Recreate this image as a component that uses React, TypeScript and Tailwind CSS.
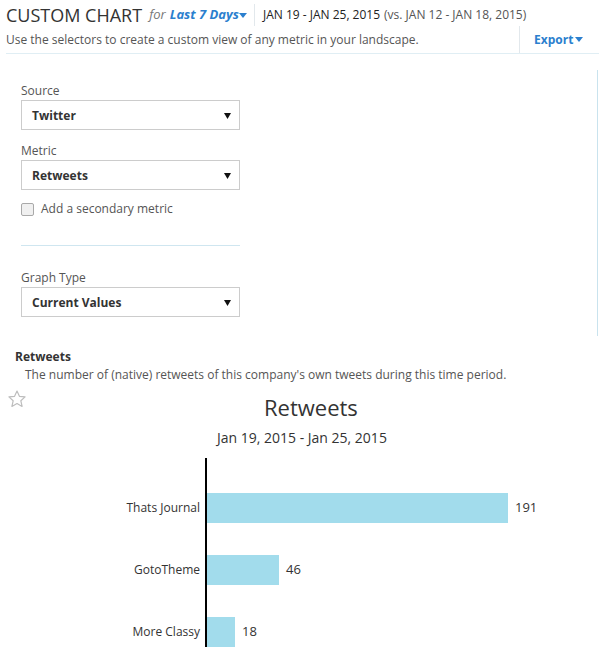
import type { ReactNode } from 'react'

const bars = [
  { label: 'Thats Journal', value: 191 },
  { label: 'GotoTheme', value: 46 },
  { label: 'More Classy', value: 18 },
]

function Caret({ className = '' }: { className?: string }) {
  return (
    <svg width="8" height="5" viewBox="0 0 8 5" className={className}>
      <path d="M0 0h8L4 5z" fill="currentColor" />
    </svg>
  )
}

function Field({ label, value, top }: { label: string; value: string; top: string }) {
  return (
    <div className={top}>
      <div className="h-[18px] pt-[1px] leading-[18px] text-[12px] text-[#555]">{label}</div>
      <div className="mt-[1px] flex h-[30px] w-[219px] items-center justify-between border border-[#ccc] pl-[10px] pr-[8px] pt-[1px]">
        <span className="text-[12px] font-bold text-[#333]">{value}</span>
        <svg width="7" height="6" viewBox="0 0 7 6">
          <path d="M0 0h7L3.5 6z" fill="#111" />
        </svg>
      </div>
    </div>
  )
}

function Divider({ children }: { children?: ReactNode }) {
  return <div className="w-px self-stretch bg-[#e2e8ec]">{children}</div>
}

export default function App() {
  const scale = 301 / 191

  return (
    <div className="w-[599px] bg-white font-['Open_Sans',sans-serif] text-[#333]">
      <div className="ml-[6px] border-b border-[#e0eef4]">
        <div className="flex h-[26px] items-center pt-[4px]">
          <span className="text-[18px] leading-[22px] text-[#333]">CUSTOM CHART</span>
          <span className="ml-[7px] text-[13px] italic text-[#777]">for</span>
          <span className="ml-[4px] text-[13px] font-bold italic text-[#2b7fce]">Last 7 Days</span>
          <Caret className="text-[#2b7fce]" />
          <div className="ml-[7px] h-full w-px bg-[#e2e8ec]" />
          <span className="ml-[8px] text-[12px] text-[#222]">JAN 19 - JAN 25, 2015</span>
          <span className="ml-[4px] text-[12px] text-[#555]">(vs. JAN 12 - JAN 18, 2015)</span>
        </div>
        <div className="flex h-[27px]">
          <div className="flex flex-1 items-center text-[12px] text-[#555]">
            Use the selectors to create a custom view of any metric in your landscape.
          </div>
          <Divider />
          <div className="flex w-[79px] items-center pl-[14px]">
            <span className="text-[12px] font-bold text-[#2b7fce]">Export</span>
            <Caret className="ml-[2px] text-[#2b7fce]" />
          </div>
        </div>
      </div>

      <div className="flex">
        <div className="flex-1 pl-[21px]">
          <Field label="Source" value="Twitter" top="mt-[27px]" />
          <Field label="Metric" value="Retweets" top="mt-[11px]" />
          <div className="mt-[10px] flex h-[18px] items-center">
            <div className="h-[13px] w-[13px] rounded-[2px] border border-[#a9a9a9] bg-[#f0f0f0]" />
            <span className="ml-[7px] text-[12px] text-[#555]">Add a secondary metric</span>
          </div>
          <div className="mt-[27px] h-px w-[219px] bg-[#cfe6f0]" />
          <Field label="Graph Type" value="Current Values" top="mt-[22px]" />
        </div>
        <div className="mr-[1px] mt-[16px] h-[266px] w-px bg-[#c9e3ee]" />
      </div>

      <div className="mt-[12px] pl-[15px] text-[12px] font-bold leading-[18px] text-[#333]">Retweets</div>
      <div className="pl-[25px] text-[12px] leading-[18px] text-[#555]">
        The number of (native) retweets of this company's own tweets during this time period.
      </div>

      <div className="flex">
        <svg width="20" height="20" viewBox="0 0 24 24" className="ml-[7px] mt-[5px] shrink-0">
          <path
            d="M12 2.5l2.9 6.3 6.8.7-5.1 4.6 1.5 6.8L12 17.4l-6.1 3.5 1.5-6.8-5.1-4.6 6.8-.7z"
            fill="none"
            stroke="#bdbdbd"
            strokeWidth="1.4"
            strokeLinejoin="round"
          />
        </svg>
        <div className="ml-[237px] mt-[9px] text-[22px] leading-[28px] text-[#333]">Retweets</div>
      </div>
      <div className="mt-[7px] pl-[217px] text-[14px] leading-[20px] text-[#333]">Jan 19, 2015 - Jan 25, 2015</div>

      <div className="mt-[10px] flex pb-[20px]">
        <div className="flex w-[205px] flex-col gap-[32px] pr-[5px] pt-[35px]">
          {bars.map((b) => (
            <div key={b.label} className="flex h-[30px] items-center justify-end text-[12px] text-[#333]">
              {b.label}
            </div>
          ))}
        </div>
        <div className="w-[2px] bg-black" />
        <div className="flex flex-1 flex-col gap-[32px] pt-[35px]">
          {bars.map((b) => (
            <div key={b.label} className="flex h-[30px] items-center">
              <div className="h-full bg-[#a2dcec]" style={{ width: Math.round(b.value * scale) }} />
              <span className="ml-[7px] text-[13px] text-[#333]">{b.value}</span>
            </div>
          ))}
        </div>
      </div>
    </div>
  )
}
